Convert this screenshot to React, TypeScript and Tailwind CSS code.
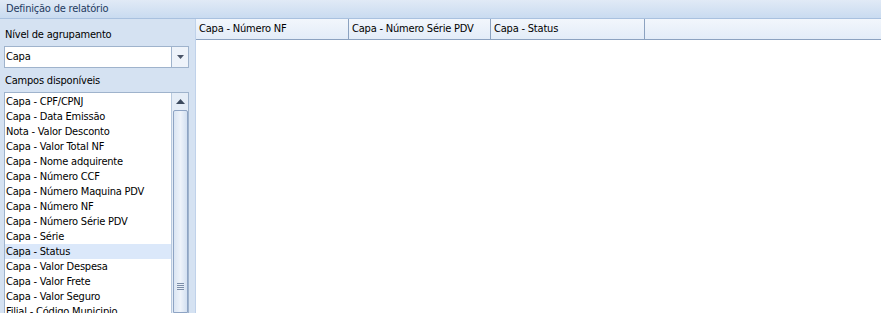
import React from "react";

const items = [
  "Capa - CPF/CPNJ",
  "Capa - Data Emissão",
  "Nota - Valor Desconto",
  "Capa - Valor Total NF",
  "Capa - Nome adquirente",
  "Capa - Número CCF",
  "Capa - Número Maquina PDV",
  "Capa - Número NF",
  "Capa - Número Série PDV",
  "Capa - Série",
  "Capa - Status",
  "Capa - Valor Despesa",
  "Capa - Valor Frete",
  "Capa - Valor Seguro",
  "Filial - Código Municipio",
];

const cols = [
  { t: "Capa - Número NF", w: "w-[153px]" },
  { t: "Capa - Número Série PDV", w: "w-[142px]" },
  { t: "Capa - Status", w: "w-[154px]" },
];

export default function App() {
  return (
    <div
      className="w-[881px] h-[313px] overflow-hidden flex flex-col bg-white text-[11px] tracking-[-0.2px] text-black"
      style={{ fontFamily: "Tahoma, 'DejaVu Sans Condensed', 'Liberation Sans', sans-serif" }}
    >
      <div className="h-[19px] shrink-0 flex items-center pl-[6px] pt-[1px] bg-gradient-to-b from-[#e1eaf6] to-[#c9dbf0] border-b border-[#a9c1df] text-[#1e3a5f]">
        Definição de relatório
      </div>
      <div className="flex flex-1 min-h-0">
        <div className="w-[196px] shrink-0 bg-[#d5e2f2] flex flex-col pl-[4px] pr-[6px] border-r border-[#c0d2ea]">
          <div className="h-[26px] flex items-end pb-[2px] pl-[1px]">Nível de agrupamento</div>
          <div className="mt-[1px] h-[22px] flex border border-[#9fb3cc] bg-white">
            <div className="flex-1 flex items-center pl-[1px] pt-[1px]">Capa</div>
            <div className="w-[17px] border-l border-[#9fb3cc] bg-[#eef3fa] flex items-center justify-center">
              <svg width="7" height="4" viewBox="0 0 7 4"><path d="M0 0h7L3.5 4z" fill="#4b5568" /></svg>
            </div>
          </div>
          <div className="h-[24px] flex items-end pb-[3px] pl-[1px]">Campos disponíveis</div>
          <div className="flex-1 min-h-0 flex border border-[#9fb3cc] border-b-0 bg-white">
            <div className="flex-1 overflow-hidden pt-[1px]">
              {items.map((it) => (
                <div
                  key={it}
                  className={`h-[15px] flex items-center pl-[1px] pt-[1px] whitespace-nowrap ${it === "Capa - Status" ? "bg-[#dbe8fa]" : ""}`}
                >
                  {it}
                </div>
              ))}
            </div>
            <div className="w-[17px] border-l border-[#b8c9de] bg-[#e5edf7] flex flex-col items-center">
              <div className="h-[17px] flex items-center justify-center">
                <svg width="9" height="5" viewBox="0 0 9 5"><path d="M4.5 0L9 5H0z" fill="#3c4a5e" /></svg>
              </div>
              <div className="flex-1 w-[15px] border border-[#8ea4c4] rounded-t-[2px] bg-gradient-to-r from-[#dae5f3] via-[#eef3fa] to-[#d3e0f1] flex items-center justify-center">
                <div className="flex flex-col gap-[1px] mt-[150px]">
                  <div className="w-[7px] h-[1px] bg-[#7b8da8]" />
                  <div className="w-[7px] h-[1px] bg-[#7b8da8]" />
                  <div className="w-[7px] h-[1px] bg-[#7b8da8]" />
                  <div className="w-[7px] h-[1px] bg-[#7b8da8]" />
                </div>
              </div>
            </div>
          </div>
        </div>
        <div className="flex-1 flex flex-col">
          <div className="h-[21px] flex bg-gradient-to-b from-[#f2f6fc] to-[#e3ecf8] border-b border-[#8ca2c0]">
            {cols.map((c) => (
              <div key={c.t} className={`${c.w} shrink-0 border-r border-[#8ca2c0] flex items-center pl-[3px] pt-[1px] whitespace-nowrap`}>
                {c.t}
              </div>
            ))}
            <div className="flex-1" />
          </div>
        </div>
      </div>
    </div>
  );
}
